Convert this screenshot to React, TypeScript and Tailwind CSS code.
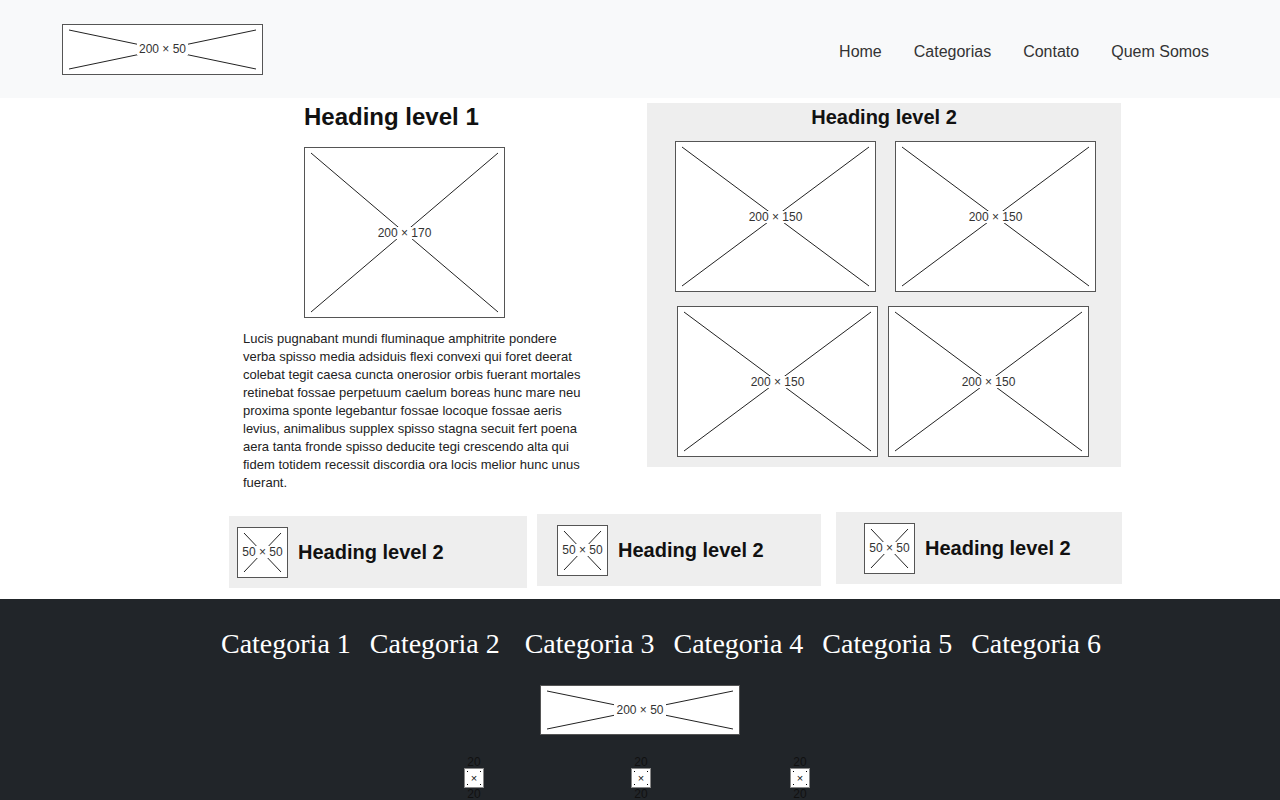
import React from "react";

// Wireframe image placeholder: box with diagonals and a size label
function Placeholder({ w, h, label }: { w: number; h: number; label: string }) {
  return (
    <div
      className="relative bg-white border border-[#555] shrink-0 flex items-center justify-center"
      style={{ width: w, height: h }}
    >
      <svg className="absolute inset-0" width={w - 2} height={h - 2}>
        <line x1="6" y1="5" x2={w - 8} y2={h - 7} stroke="#222" strokeWidth="1" />
        <line x1={w - 8} y1="5" x2="6" y2={h - 7} stroke="#222" strokeWidth="1" />
      </svg>
      <span className="relative bg-white px-[2px] leading-none text-[12px] text-[#333]">{label}</span>
    </div>
  );
}

function TinyIcon({ className = "" }: { className?: string }) {
  return (
    <div className={`flex flex-col items-center text-[12px] leading-[12px] text-[#111] ${className}`}>
      <span>20</span>
      <div className="relative w-[20px] h-[20px] bg-white border border-[#888] flex items-center justify-center text-[11px]">
        <span className="absolute left-[2px] top-[2px] w-[1px] h-[1px] bg-black" />
        <span className="absolute right-[2px] top-[2px] w-[1px] h-[1px] bg-black" />
        <span className="absolute left-[2px] bottom-[2px] w-[1px] h-[1px] bg-black" />
        <span className="absolute right-[2px] bottom-[2px] w-[1px] h-[1px] bg-black" />
        ×
      </div>
      <span>20</span>
    </div>
  );
}

const categories = ["Categoria 1", "Categoria 2", "Categoria 3", "Categoria 4", "Categoria 5", "Categoria 6"];

export default function App() {
  return (
    <div className="min-h-screen bg-white font-['Liberation_Sans',Arial,sans-serif] text-[#111]">
      {/* HEADER */}
      <header className="h-[98px] bg-[#f8f9fa] flex items-center justify-between pl-[62px] pr-[71px]">
        <Placeholder w={201} h={51} label="200 × 50" />
        <nav className="flex gap-[32px] text-[16px] text-[#333] pt-[6px]">
          <span>Home</span>
          <span>Categorias</span>
          <span>Contato</span>
          <span>Quem Somos</span>
        </nav>
      </header>

      {/* MAIN */}
      <main className="flex pt-[5px]">
        <section className="ml-[230px] w-[400px] flex flex-col">
          <h1 className="pl-[74px] text-[24px] font-bold leading-[26px] mt-[1px]">Heading level 1</h1>
          <div className="ml-[74px] mt-[17px]">
            <Placeholder w={201} h={171} label="200 × 170" />
          </div>
          <p className="ml-[13px] w-[346px] mt-[12px] text-[13px] leading-[18px] text-[#222]">
            Lucis pugnabant mundi fluminaque amphitrite pondere verba spisso media adsiduis flexi convexi qui foret
            deerat colebat tegit caesa cuncta onerosior orbis fuerant mortales retinebat fossae perpetuum caelum boreas
            hunc mare neu proxima sponte legebantur fossae locoque fossae aeris levius, animalibus supplex spisso stagna
            secuit fert poena aera tanta fronde spisso deducite tegi crescendo alta qui fidem totidem recessit
            discordia ora locis melior hunc unus fuerant.
          </p>
        </section>

        <section className="ml-[17px] w-[474px] h-[364px] bg-[#eeeeee] flex flex-col">
          <h2 className="text-center text-[20px] font-bold leading-[24px] mt-[2px]">Heading level 2</h2>
          <div className="flex gap-[19px] pl-[28px] mt-[12px]">
            <Placeholder w={201} h={151} label="200 × 150" />
            <Placeholder w={201} h={151} label="200 × 150" />
          </div>
          <div className="flex gap-[10px] pl-[30px] mt-[14px]">
            <Placeholder w={201} h={151} label="200 × 150" />
            <Placeholder w={201} h={151} label="200 × 150" />
          </div>
        </section>
      </main>

      {/* CARDS */}
      <div className="flex items-start pl-[229px] mt-[20px] h-[87px]">
        <div className="mt-[4px] w-[298px] h-[72px] bg-[#eeeeee] flex items-center pl-[8px] gap-[10px]">
          <Placeholder w={51} h={51} label="50 × 50" />
          <h2 className="text-[20px] font-bold">Heading level 2</h2>
        </div>
        <div className="ml-[10px] mt-[2px] w-[284px] h-[72px] bg-[#eeeeee] flex items-center pl-[20px] gap-[10px]">
          <Placeholder w={51} h={51} label="50 × 50" />
          <h2 className="text-[20px] font-bold">Heading level 2</h2>
        </div>
        <div className="ml-[15px] w-[286px] h-[72px] bg-[#eeeeee] flex items-center pl-[28px] gap-[10px]">
          <Placeholder w={51} h={51} label="50 × 50" />
          <h2 className="text-[20px] font-bold">Heading level 2</h2>
        </div>
      </div>

      {/* FOOTER */}
      <footer className="bg-[#212529] flex flex-col items-center pt-[28px] pb-[10px]">
        <div className="flex ml-[42px] text-white text-[28px] leading-[34px] font-['Liberation_Serif',Georgia,serif]">
          {categories.map((c, i) => (
            <span key={c} className={i === 0 ? "" : i === 2 ? "ml-[25px]" : "ml-[19px]"}>
              {c}
            </span>
          ))}
        </div>
        <div className="mt-[24px]">
          <Placeholder w={200} h={50} label="200 × 50" />
        </div>
        <div className="flex mt-[21px] ml-[-6px]">
          <TinyIcon />
          <TinyIcon className="ml-[147px]" />
          <TinyIcon className="ml-[139px]" />
        </div>
      </footer>
    </div>
  );
}
